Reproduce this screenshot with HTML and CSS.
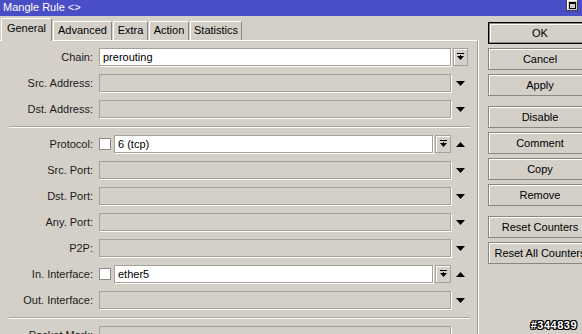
FILE: index.html
```html
<!DOCTYPE html>
<html lang="en">
<head>
  <meta charset="UTF-8" />
  <title>Mangle Rule</title>
  <link rel="stylesheet" href="styles.css">
</head>
<body>
  <div class="win">
    <div class="titlebar">
      <span>Mangle Rule &lt;&gt;</span>
      <span class="maxbtn"><span></span></span>
    </div>

    <div class="main">
      <div class="left">
        <div class="tabs">
          <div class="tab active" style="width:51px">General</div>
          <div class="tab" style="width:59px">Advanced</div>
          <div class="tab" style="width:35px">Extra</div>
          <div class="tab" style="width:40px">Action</div>
          <div class="tab" style="width:52px">Statistics</div>
        </div>

        <div class="panel">
          <div class="row">
            <div class="lbl">Chain:</div>
            <div class="fld white wide">prerouting</div>
            <div class="ddb chainbtn"><svg width="7" height="8" viewBox="0 0 7 8"><rect x="0" y="0" width="7" height="1" fill="#000"/><rect x="3" y="2" width="1" height="2" fill="#000"/><polygon points="0,3 7,3 3.5,7" fill="#000"/></svg></div>
          </div>
          <div class="row">
            <div class="lbl">Src. Address:</div>
            <div class="fld wide"></div>
            <div class="arr"><svg width="9" height="5"><polygon points="0,0 9,0 4.5,5" fill="#000"/></svg></div>
          </div>
          <div class="row">
            <div class="lbl">Dst. Address:</div>
            <div class="fld wide"></div>
            <div class="arr"><svg width="9" height="5"><polygon points="0,0 9,0 4.5,5" fill="#000"/></svg></div>
          </div>

          <div class="sep"></div>

          <div class="row">
            <div class="lbl">Protocol:</div>
            <div class="chk"></div>
            <div class="fld white narrow">6 (tcp)</div>
            <div class="ddb"><svg width="7" height="8" viewBox="0 0 7 8"><rect x="0" y="0" width="7" height="1" fill="#000"/><rect x="3" y="2" width="1" height="2" fill="#000"/><polygon points="0,3 7,3 3.5,7" fill="#000"/></svg></div>
            <div class="arr"><svg width="9" height="5"><polygon points="0,5 9,5 4.5,0" fill="#000"/></svg></div>
          </div>
          <div class="row">
            <div class="lbl">Src. Port:</div>
            <div class="fld wide"></div>
            <div class="arr"><svg width="9" height="5"><polygon points="0,0 9,0 4.5,5" fill="#000"/></svg></div>
          </div>
          <div class="row">
            <div class="lbl">Dst. Port:</div>
            <div class="fld wide"></div>
            <div class="arr"><svg width="9" height="5"><polygon points="0,0 9,0 4.5,5" fill="#000"/></svg></div>
          </div>
          <div class="row">
            <div class="lbl">Any. Port:</div>
            <div class="fld wide"></div>
            <div class="arr"><svg width="9" height="5"><polygon points="0,0 9,0 4.5,5" fill="#000"/></svg></div>
          </div>
          <div class="row">
            <div class="lbl">P2P:</div>
            <div class="fld wide"></div>
            <div class="arr"><svg width="9" height="5"><polygon points="0,0 9,0 4.5,5" fill="#000"/></svg></div>
          </div>
          <div class="row">
            <div class="lbl">In. Interface:</div>
            <div class="chk"></div>
            <div class="fld white narrow">ether5</div>
            <div class="ddb"><svg width="7" height="8" viewBox="0 0 7 8"><rect x="0" y="0" width="7" height="1" fill="#000"/><rect x="3" y="2" width="1" height="2" fill="#000"/><polygon points="0,3 7,3 3.5,7" fill="#000"/></svg></div>
            <div class="arr"><svg width="9" height="5"><polygon points="0,5 9,5 4.5,0" fill="#000"/></svg></div>
          </div>
          <div class="row">
            <div class="lbl">Out. Interface:</div>
            <div class="fld wide"></div>
            <div class="arr"><svg width="9" height="5"><polygon points="0,0 9,0 4.5,5" fill="#000"/></svg></div>
          </div>

          <div class="sep"></div>

          <div class="row">
            <div class="lbl">Packet Mark:</div>
            <div class="fld wide"></div>
          </div>
        </div>
      </div>

      <div class="side">
        <div class="btn default">OK</div>
        <div class="btn">Cancel</div>
        <div class="btn">Apply</div>
        <div class="btn group">Disable</div>
        <div class="btn">Comment</div>
        <div class="btn">Copy</div>
        <div class="btn">Remove</div>
        <div class="btn group">Reset Counters</div>
        <div class="btn">Reset All Counters</div>
      </div>
    </div>

    <div class="stamp">#344839</div>
  </div>
</body>
</html>
```

FILE: styles.css
```css
body {
  margin: 0;
  background-color: #d4d0c8;
  font-family: "Liberation Sans", Arial, sans-serif;
  font-size: 11px;
  color: #000;
}
.win {
  position: relative;
  width: 582px;
  height: 334px;
  overflow: hidden;
  background-color: #d4d0c8;
}
.titlebar {
  height: 16px;
  background-color: #4a4ec6;
  color: #fff;
  display: flex;
  justify-content: space-between;
  align-items: flex-start;
  padding: 0 4px 0 3px;
  line-height: 14px;
}
.maxbtn {
  width: 10px;
  height: 10px;
  margin-top: -1px;
  background: #d4d0c8;
  border: 1px solid #404040;
  box-shadow: inset 1px 1px #fff;
  display: flex;
  align-items: center;
  justify-content: center;
}
.maxbtn span {
  width: 5px;
  height: 4px;
  border: 1px solid #000;
  border-top-width: 2px;
}
.main {
  display: flex;
  height: 318px;
}
.left {
  width: 478px;
  flex: none;
}
.tabs {
  height: 24px;
  display: flex;
  align-items: flex-end;
  padding-left: 1px;
  position: relative;
  z-index: 2;
}
.tab {
  box-sizing: border-box;
  height: 19px;
  margin-right: 1px;
  border-top: 1px solid #fff;
  border-left: 1px solid #fff;
  border-right: 1px solid #8a877f;
  border-radius: 2px 2px 0 0;
  text-align: center;
  line-height: 17px;
}
.tab.active {
  height: 23px;
  margin-bottom: -1px;
  background-color: #d4d0c8;
  line-height: 19px;
  margin-right: 1px;
}
.panel {
  height: 300px;
  border-top: 1px solid #fff;
  border-right: 1px solid #a09c94;
  box-shadow: 1px 0 0 #fff;
  padding-top: 7px;
}
.row {
  display: flex;
  align-items: center;
  height: 18px;
  margin-bottom: 8px;
}
.lbl {
  width: 99px;
  flex: none;
  box-sizing: border-box;
  padding-right: 6px;
  text-align: right;
  color: #1a1a1a;
}
.fld {
  box-sizing: border-box;
  height: 18px;
  border: 1px solid #a6a29a;
  box-shadow: 1px 1px 0 #fff;
  padding-left: 3px;
  line-height: 16px;
  flex: none;
}
.fld.white {
  background-color: #fff;
}
.wide {
  width: 352px;
}
.narrow {
  width: 319px;
}
.chk {
  box-sizing: border-box;
  width: 12px;
  height: 12px;
  margin-right: 3px;
  background: #fff;
  border: 1px solid #8c8c8c;
  flex: none;
}
.ddb {
  box-sizing: border-box;
  width: 16px;
  height: 18px;
  margin-left: 2px;
  border: 1px solid #a6a29a;
  box-shadow: inset 1px 1px #fff;
  display: flex;
  align-items: center;
  justify-content: center;
  flex: none;
}
.chainbtn {
  width: 15px;
}
.arr {
  width: 19px;
  padding-left: 5px;
  box-sizing: border-box;
  display: flex;
  align-items: center;
}
.sep {
  width: 461px;
  margin: 1px 0 7px 9px;
  border-top: 1px solid #aaa69e;
  border-bottom: 1px solid #fff;
}
.side {
  padding-top: 6px;
  margin-left: 10px;
  flex: none;
}
.btn {
  box-sizing: border-box;
  width: 104px;
  height: 22px;
  margin-bottom: 4px;
  border: 1px solid #8a877f;
  box-shadow: inset 1px 1px #fff;
  text-align: center;
  line-height: 20px;
  white-space: nowrap;
}
.btn.default {
  border: 1px solid #000;
  box-shadow: inset 0 0 0 1px #8a877f, inset 2px 2px #fff;
}
.btn.group {
  margin-top: 10px;
}
.stamp {
  position: absolute;
  right: 5px;
  bottom: 3px;
  color: #fff;
  font-weight: bold;
  font-size: 11px;
  letter-spacing: 0.5px;
  text-shadow: 1px 0 #000, -1px 0 #000, 0 1px #000, 0 -1px #000, 1px 1px #000, -1px -1px #000, 1px -1px #000, -1px 1px #000;
}
```
